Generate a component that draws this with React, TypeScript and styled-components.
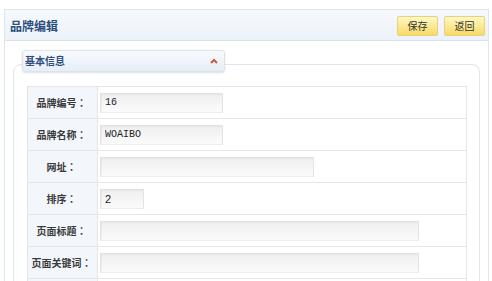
import React from "react";
import styled, { createGlobalStyle } from "styled-components";

const Global = createGlobalStyle`
  html, body { margin: 0; padding: 0; overflow: hidden; background: #ffffff; }
  body { font-family: "Noto Sans CJK SC", "Noto Sans", sans-serif; color: #333; }
`;

const Page = styled.div`
  padding: 9px 3px 0 4px;
`;

const Panel = styled.div`
  border: 1px solid #dce5ef;
  border-bottom: none;
  background: #fff;
`;

const Header = styled.div`
  height: 30px;
  display: flex;
  align-items: center;
  justify-content: space-between;
  padding: 0 3px 0 5px;
  background: linear-gradient(#f6f9fd, #edf2f9);
  border-bottom: 1px solid #d9e3ee;
`;

const Title = styled.div`
  font-size: 12px;
  font-weight: bold;
  color: #2d4e7e;
  line-height: 14px;
  padding-top: 1px;
`;

const Actions = styled.div`
  display: flex;
  gap: 6px;
  padding-top: 2px;
`;

const Btn = styled.button`
  width: 41px;
  height: 20px;
  padding: 0;
  border: 1px solid #e6d27e;
  border-radius: 2px;
  background: linear-gradient(#fff8c4, #f7da66);
  font-family: "Noto Sans CJK SC", sans-serif;
  font-size: 10px;
  color: #333;
  line-height: 18px;
  cursor: pointer;
`;

const Body = styled.div`
  padding: 23px 8px 0 8px;
`;

const Fieldset = styled.div`
  border: 1px solid #dfe5ec;
  border-radius: 8px;
  padding: 0 12px 20px 13px;
`;

const Legend = styled.div`
  margin: -15px 0 0 -5px;
  width: 193px;
  height: 20px;
  border: 1px solid #dbe3ed;
  border-radius: 3px;
  background: linear-gradient(#f8fafd, #e7eef7);
  box-shadow: 0 1px 2px rgba(60, 80, 110, 0.18);
  display: flex;
  align-items: center;
  justify-content: space-between;
  padding: 0 6px 0 2px;
  box-sizing: content-box;
`;

const LegendText = styled.span`
  font-size: 10px;
  font-weight: bold;
  color: #2d4e7e;
  line-height: 12px;
`;

const Table = styled.table`
  margin-top: 14px;
  width: 100%;
  border-collapse: collapse;
  border: 1px solid #e4e4e4;
`;

const Row = styled.tr`
  height: 32px;
`;

const LabelCell = styled.td`
  width: 67px;
  padding: 0 2px 0 0;
  border: 1px solid #e6e6e6;
  background: #f3f7fc;
  text-align: center;
  font-size: 10px;
  font-weight: bold;
  color: #3a3a3a;
  white-space: nowrap;
`;

const Colon = styled.span`
  font-family: "Noto Sans CJK TC", "Noto Sans CJK SC", sans-serif;
`;

const FieldCell = styled.td`
  padding: 0 0 0 2px;
  border: 1px solid #e6e6e6;
  background: #fff;
  vertical-align: middle;
`;

const Input = styled.input<{ $w: number; $sans?: boolean }>`
  display: block;
  box-sizing: border-box;
  width: ${(p) => p.$w}px;
  height: 20px;
  margin: 0;
  padding: 0 4px;
  border: 1px solid #e3e3e3;
  border-bottom-color: #ececec;
  background: linear-gradient(#efefef, #fbfbfb);
  box-shadow: inset 1px 1px 1px rgba(0, 0, 0, 0.04);
  font-family: ${(p) => (p.$sans ? '"Liberation Sans", Arial, sans-serif' : '"Liberation Mono", monospace')};
  font-size: ${(p) => (p.$sans ? "11px" : "10px")};
  color: #222;
  outline: none;
`;

const Chevron = () => (
  <svg width="8" height="6" viewBox="0 0 8 6">
    <polyline points="1,5 4,2 7,5" fill="none" stroke="#c4603a" strokeWidth="2" />
  </svg>
);

const rows: { label: string; value: string; w: number; sans?: boolean }[] = [
  { label: "品牌编号", value: "16", w: 123 },
  { label: "品牌名称", value: "WOAIBO", w: 123 },
  { label: "网址", value: "", w: 214 },
  { label: "排序", value: "2", w: 44, sans: true },
  { label: "页面标题", value: "", w: 319 },
  { label: "页面关键词", value: "", w: 319 },
  { label: "", value: "", w: 319 },
];

export default function App() {
  return (
    <>
      <Global />
      <Page>
        <Panel>
          <Header>
            <Title>品牌编辑</Title>
            <Actions>
              <Btn>保存</Btn>
              <Btn>返回</Btn>
            </Actions>
          </Header>
          <Body>
            <Fieldset>
              <Legend>
                <LegendText>基本信息</LegendText>
                <Chevron />
              </Legend>
              <Table>
                <tbody>
                  {rows.map((r, i) => (
                    <Row key={i}>
                      <LabelCell>
                        {r.label}
                        {r.label && <Colon>：</Colon>}
                      </LabelCell>
                      <FieldCell>
                        <Input $w={r.w} $sans={r.sans} defaultValue={r.value} />
                      </FieldCell>
                    </Row>
                  ))}
                </tbody>
              </Table>
            </Fieldset>
          </Body>
        </Panel>
      </Page>
    </>
  );
}
